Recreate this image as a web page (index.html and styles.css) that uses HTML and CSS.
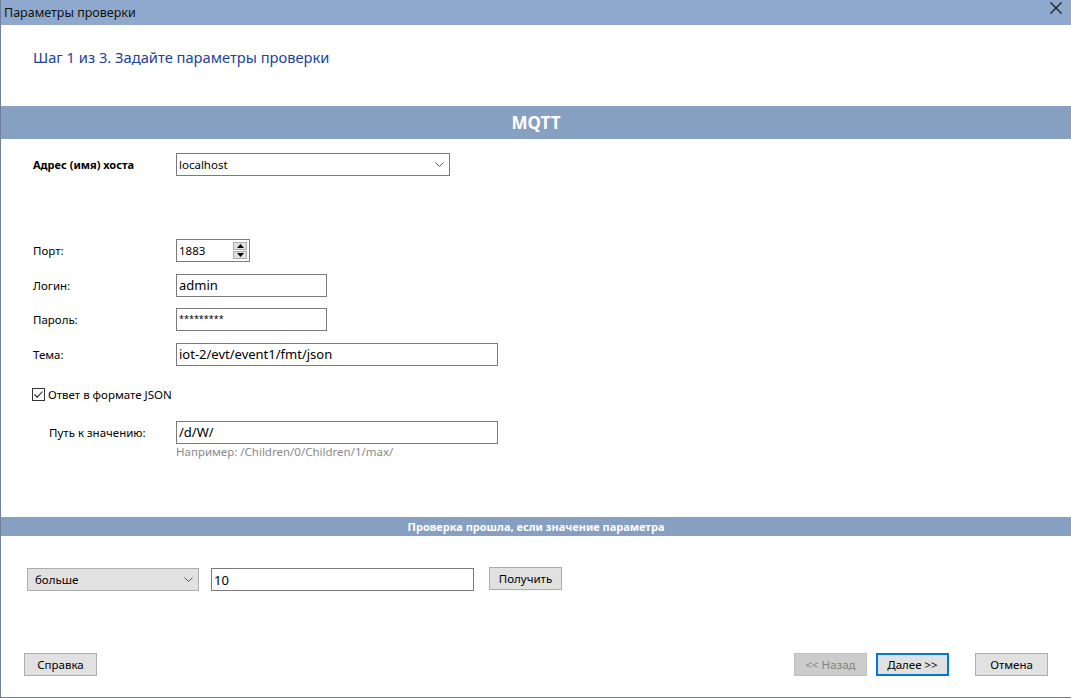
FILE: index.html
```html
<!DOCTYPE html>
<html lang="ru">

<head>
    <meta charset="UTF-8">
    <title>Параметры проверки</title>
    <link rel="stylesheet" href="styles.css">
</head>

<body>
    <div class="window">
        <div class="titlebar">
            <span class="title">Параметры проверки</span>
            <svg class="close" width="12" height="12" viewBox="0 0 12 12">
                <path d="M0.5 0.5L11.5 11.5M11.5 0.5L0.5 11.5" stroke="#1e1e1e" stroke-width="1.2" fill="none" />
            </svg>
        </div>

        <div class="step">Шаг 1 из 3. Задайте параметры проверки</div>

        <div class="band band-big">MQTT</div>

        <div class="form">
            <div class="row row-host">
                <label class="lbl bold">Адрес (имя) хоста</label>
                <div class="select select-host">
                    <span>localhost</span>
                    <svg class="chev" width="9" height="6" viewBox="0 0 9 6">
                        <path d="M0.5 0.5L4.5 4.5L8.5 0.5" stroke="#555" fill="none" />
                    </svg>
                </div>
            </div>

            <div class="row row-port">
                <label class="lbl">Порт:</label>
                <div class="input spin">
                    <span class="small">1883</span>
                    <div class="spin-btns">
                        <div class="spin-btn"><svg width="7" height="4" viewBox="0 0 7 4"><path d="M0 4L3.5 0L7 4Z" fill="#000" /></svg></div>
                        <div class="spin-btn"><svg width="7" height="4" viewBox="0 0 7 4"><path d="M0 0L7 0L3.5 4Z" fill="#000" /></svg></div>
                    </div>
                </div>
            </div>

            <div class="row">
                <label class="lbl">Логин:</label>
                <div class="input w-short">admin</div>
            </div>

            <div class="row">
                <label class="lbl">Пароль:</label>
                <div class="input w-short pass">*********</div>
            </div>

            <div class="row">
                <label class="lbl">Тема:</label>
                <div class="input w-long">iot-2/evt/event1/fmt/json</div>
            </div>

            <div class="check-row">
                <span class="checkbox">
                    <svg width="11" height="11" viewBox="0 0 11 11">
                        <path d="M1.5 5.5L4.2 8.2L9.5 2.5" stroke="#222" stroke-width="1.1" fill="none" />
                    </svg>
                </span>
                <span>Ответ в формате JSON</span>
            </div>

            <div class="row row-path">
                <label class="lbl lbl-indent">Путь к значению:</label>
                <div class="input w-long">/d/W/</div>
            </div>
            <div class="hint">Например: /Children/0/Children/1/max/</div>
        </div>

        <div class="band band-small">Проверка прошла, если значение параметра</div>

        <div class="compare">
            <div class="select select-op">
                <span>больше</span>
                <svg class="chev" width="9" height="6" viewBox="0 0 9 6">
                    <path d="M0.5 0.5L4.5 4.5L8.5 0.5" stroke="#555" fill="none" />
                </svg>
            </div>
            <div class="input w-value">10</div>
            <button class="btn btn-get">Получить</button>
        </div>

        <div class="footer">
            <button class="btn">Справка</button>
            <div class="spacer"></div>
            <button class="btn disabled">&lt;&lt; Назад</button>
            <button class="btn primary">Далее &gt;&gt;</button>
            <button class="btn btn-cancel">Отмена</button>
        </div>
    </div>
</body>

</html>
```

FILE: styles.css
```css
html,
body {
    margin: 0;
    padding: 0;
    background: #fff;
}

body {
    font-family: "Noto Sans", "Open Sans", sans-serif;
    font-size: 12px;
    color: #000;
}

.window {
    width: 1071px;
    height: 698px;
    box-sizing: border-box;
    border-left: 1px solid #6d7f9c;
    border-bottom: 1px solid #6d7f9c;
    display: flex;
    flex-direction: column;
    position: relative;
    overflow: hidden;
}

.titlebar {
    height: 25px;
    background: #8ea9cd;
    display: flex;
    align-items: center;
    padding-left: 3px;
    flex-shrink: 0;
}

.title {
    font-size: 12.5px;
    color: #111;
}

.close {
    position: absolute;
    right: 9px;
    top: 2px;
}

.step {
    height: 81px;
    box-sizing: border-box;
    padding: 22px 0 0 32px;
    font-size: 14.7px;
    color: #1c429e;
    line-height: 20px;
}

.band {
    background: #87a0c2;
    color: #fff;
    font-weight: bold;
    text-align: center;
    flex-shrink: 0;
}

.band-big {
    height: 33px;
    line-height: 33px;
    font-size: 17px;
}

.band-small {
    height: 19px;
    line-height: 19px;
    font-size: 11px;
    margin-top: 58px;
}

.form {
    padding-left: 32px;
}

.row {
    display: flex;
    align-items: center;
    height: 23px;
    margin-top: 11.5px;
}

.row-host {
    margin-top: 14px;
}

.row-port {
    margin-top: 63px;
}

.lbl {
    width: 143px;
    flex-shrink: 0;
    font-size: 11.5px;
}

.lbl-indent {
    width: 127px;
    padding-left: 16px;
}

.bold {
    font-weight: bold;
    font-size: 11px;
}

.input,
.select {
    box-sizing: border-box;
    height: 23px;
    border: 1px solid #7a7a7a;
    background: #fff;
    display: flex;
    align-items: center;
    padding-left: 2px;
    font-size: 13px;
}

.select {
    font-size: 11.5px;
    justify-content: space-between;
    padding-right: 5px;
}

.select-host {
    width: 274px;
}

.spin {
    width: 74px;
    justify-content: space-between;
    padding-right: 2px;
}

.small {
    font-size: 11.5px;
}

.spin-btns {
    display: flex;
    flex-direction: column;
    gap: 1px;
}

.spin-btn {
    width: 14px;
    height: 8px;
    background: #e1e1e1;
    border: 1px solid #adadad;
    box-sizing: border-box;
    display: flex;
    align-items: center;
    justify-content: center;
}

.w-short {
    width: 151px;
}

.pass {
    font-size: 9px;
    align-items: flex-start;
    padding-top: 3px;
}

.w-long {
    width: 322px;
}

.check-row {
    display: flex;
    align-items: center;
    height: 16px;
    gap: 3px;
    margin-top: 21px;
    margin-left: -1px;
    font-size: 11.5px;
}

.checkbox {
    width: 13px;
    height: 13px;
    box-sizing: border-box;
    border: 1px solid #333;
    display: flex;
    align-items: center;
    justify-content: center;
}

.row-path {
    margin-top: 18px;
}

.hint {
    margin: 0 0 0 143px;
    line-height: 15px;
    color: #8a8a8a;
    font-size: 11.5px;
}

.compare {
    display: flex;
    align-items: center;
    padding-left: 26px;
    margin-top: 31px;
}

.select-op {
    width: 172px;
    background: #e1e1e1;
    border-color: #adadad;
    padding-left: 7px;
}

.w-value {
    width: 263px;
    margin-left: 12px;
}

.btn {
    box-sizing: border-box;
    width: 73px;
    height: 23px;
    background: #e1e1e1;
    border: 1px solid #adadad;
    font-family: inherit;
    font-size: 11.5px;
    padding: 0;
    color: #000;
}

.btn-get {
    margin-left: 15px;
    margin-bottom: 3px;
}

.footer {
    display: flex;
    align-items: center;
    padding: 0 23px 0 23px;
    margin-top: 60px;
}

.spacer {
    flex: 1;
}

.disabled {
    background: #cccccc;
    border-color: #bfbfbf;
    color: #838383;
}

.primary {
    border: 2px solid #0078d7;
    margin-left: 9px;
}

.btn-cancel {
    margin-left: 26px;
}
```
